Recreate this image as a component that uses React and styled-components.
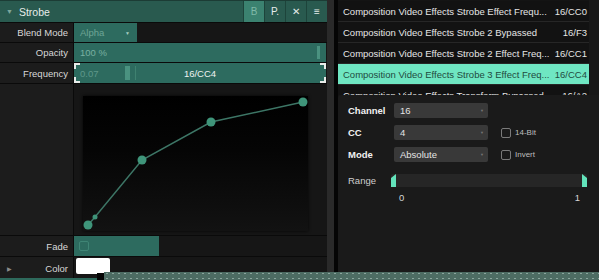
import styled, { createGlobalStyle } from 'styled-components'

const GlobalStyle = createGlobalStyle`
  html, body {
    margin: 0;
    padding: 0;
    background: #111;
    overflow: hidden;
  }
  body {
    font-family: 'Liberation Sans', Arial, sans-serif;
    font-size: 9.5px;
  }
`

const mappings = [
  { name: 'Composition Video Effects Strobe Effect Frequ...', id: '16/CC0' },
  { name: 'Composition Video Effects Strobe 2 Bypassed', id: '16/F3' },
  { name: 'Composition Video Effects Strobe 2 Effect Freq...', id: '16/CC1' },
  { name: 'Composition Video Effects Strobe 3 Effect Freq...', id: '16/CC4', active: true },
  { name: 'Composition Video Effects Transform Bypassed', id: '16/A2' },
]

const curve = [
  [5, 129, 4.5],
  [12, 121, 2.5],
  [59, 64, 4.5],
  [128, 26, 4.5],
  [220, 6, 4.5],
]

const App = () => {
  return (
    <Page>
      <GlobalStyle />
      <Inspector>
        <Header>
          <Caret>▼</Caret>
          <Title>Strobe</Title>
          <Buttons>
            <HeadButton $active>B</HeadButton>
            <HeadButton>P.</HeadButton>
            <HeadButton>✕</HeadButton>
            <HeadButton>≡</HeadButton>
          </Buttons>
        </Header>

        <Row $h={20}>
          <Label>Blend Mode</Label>
          <Cell>
            <Dropdown>
              Alpha
              <DropArrow>▼</DropArrow>
            </Dropdown>
          </Cell>
        </Row>

        <Row $h={20}>
          <Label>Opacity</Label>
          <Cell>
            <Bar>
              <BarValue>100 %</BarValue>
              <Handle style={{ left: 243 }} />
            </Bar>
          </Cell>
        </Row>

        <Row $h={21}>
          <Label>Frequency</Label>
          <Cell>
            <Bar>
              <BarValue $dim>0.07</BarValue>
              <Handle style={{ left: 51, width: 5 }} />
              <Tick style={{ left: 61 }} />
              <BarCenter>16/CC4</BarCenter>
              <Corner $v="top" $h="left" />
              <Corner $v="bottom" $h="left" />
              <Corner $v="top" $h="right" />
              <Corner $v="bottom" $h="right" />
            </Bar>
          </Cell>
        </Row>

        <Row $h={152}>
          <Label />
          <CurveCell>
            <CurveBox>
              <svg width="225" height="135" viewBox="0 0 225 135">
                <polyline
                  points={curve.map(([x, y]) => `${x},${y}`).join(' ')}
                  fill="none"
                  stroke="#3d7666"
                  strokeWidth="1.5"
                />
                {curve.map(([x, y, r], i) => (
                  <circle key={i} cx={x} cy={y} r={r} fill="#3f957a" />
                ))}
              </svg>
            </CurveBox>
          </CurveCell>
        </Row>

        <Row $h={21}>
          <Label>Fade</Label>
          <Cell>
            <FadeBar>
              <Check $teal />
            </FadeBar>
          </Cell>
        </Row>

        <Row $h={24}>
          <Label>
            <Expand>▶</Expand>
            Color
          </Label>
          <Cell $top>
            <Swatch />
          </Cell>
        </Row>
      </Inspector>

      <Gutter />

      <Side>
        <ListArea>
          <List>
            {mappings.map((m) => (
              <ListRow key={m.id} $active={m.active}>
                <span>{m.name}</span>
                <span>{m.id}</span>
              </ListRow>
            ))}
          </List>
          <ScrollTrack />
        </ListArea>

        <MappingPanel>
          <FormRow>
            <FormLabel>Channel</FormLabel>
            <Select>
              16<SelArrow>▼</SelArrow>
            </Select>
          </FormRow>
          <FormRow>
            <FormLabel>CC</FormLabel>
            <Select>
              4<SelArrow>▼</SelArrow>
            </Select>
            <Option>
              <Check />
              14-Bit
            </Option>
          </FormRow>
          <FormRow>
            <FormLabel>Mode</FormLabel>
            <Select>
              Absolute<SelArrow>▼</SelArrow>
            </Select>
            <Option>
              <Check />
              Invert
            </Option>
          </FormRow>
          <RangeRow>
            <RangeLabel>Range</RangeLabel>
            <Track>
              <Grip $side="left" />
              <Grip $side="right" />
            </Track>
          </RangeRow>
          <RangeScale>
            <span>0</span>
            <span>1</span>
          </RangeScale>
        </MappingPanel>
      </Side>

      <Dock>
        <DockStub />
        <DockNotch />
        <DockBar />
      </Dock>
    </Page>
  )
}

export default App

const Page = styled.div`
  position: relative;
  width: 599px;
  height: 280px;
  display: flex;
  overflow: hidden;
  background: #161616;
  color: #d6d6d6;
`
const Inspector = styled.div`
  width: 327px;
  display: flex;
  flex-direction: column;
  background: #151515;
`
const Header = styled.div`
  height: 21px;
  border-top: 1px solid #1c3c35;
  display: flex;
  align-items: center;
  background: #295a4f;
`
const Caret = styled.span`
  font-size: 7px;
  color: #7ea79b;
  margin-left: 6px;
`
const Title = styled.span`
  font-size: 10.5px;
  color: #e8ecea;
  margin-left: 6px;
`
const Buttons = styled.div`
  margin-left: auto;
  display: flex;
  height: 100%;
`
const HeadButton = styled.div`
  width: 20px;
  height: 100%;
  display: flex;
  align-items: center;
  justify-content: center;
  border-left: 1px solid #1d443b;
  background: ${(p) => (p.$active ? '#3b8270' : '#295a4f')};
  color: ${(p) => (p.$active ? '#7fb9a8' : '#e6ecea')};
  font-size: 10px;
`
const Row = styled.div`
  height: ${(p) => p.$h}px;
  display: flex;
  border-top: 1px solid #0a0a0a;
  box-sizing: border-box;
`
const Label = styled.div`
  position: relative;
  width: 68px;
  padding-right: 5px;
  display: flex;
  align-items: center;
  justify-content: flex-end;
  background: #1c1c1c;
  color: #d8d8d8;
  white-space: nowrap;
  border-right: 1px solid #0a0a0a;
`
const Expand = styled.span`
  position: absolute;
  left: 7px;
  font-size: 6px;
  color: #8a8a8a;
`
const Cell = styled.div`
  flex: 1;
  display: flex;
  align-items: ${(p) => (p.$top ? 'flex-start' : 'stretch')};
  padding-right: 1px;
  background: #161616;
`
const Dropdown = styled.div`
  width: 57px;
  padding-left: 6px;
  display: flex;
  align-items: center;
  background: #2d6b5f;
  color: #6ea596;
  position: relative;
`
const DropArrow = styled.span`
  position: absolute;
  right: 7px;
  font-size: 5px;
  color: #a6cbc0;
`
const Bar = styled.div`
  position: relative;
  flex: 1;
  display: flex;
  align-items: center;
  background: #2d6b5f;
`
const BarValue = styled.span`
  margin-left: 6px;
  color: ${(p) => (p.$dim ? '#5f988a' : '#79b0a1')};
`
const BarCenter = styled.span`
  position: absolute;
  left: 0;
  right: 0;
  text-align: center;
  color: #eef3f1;
`
const Handle = styled.div`
  position: absolute;
  top: 3px;
  bottom: 3px;
  width: 3px;
  background: #4a9280;
`
const Tick = styled.div`
  position: absolute;
  top: 3px;
  bottom: 3px;
  width: 1px;
  background: #3f8170;
`
const Corner = styled.div`
  position: absolute;
  width: 4px;
  height: 4px;
  ${(p) => p.$v}: 0;
  ${(p) => p.$h}: 0;
  border-${(p) => p.$v}: 2px solid #e9ecea;
  border-${(p) => p.$h}: 2px solid #e9ecea;
`
const CurveCell = styled.div`
  flex: 1;
  padding: 12px 18px 3px 9px;
  background: #161616;
`
const CurveBox = styled.div`
  width: 225px;
  height: 135px;
  background: linear-gradient(#000 0%, #050505 40%, #121212 100%);
  box-shadow: 0 0 3px #050505;
`
const FadeBar = styled.div`
  box-sizing: border-box;
  width: 85px;
  display: flex;
  align-items: center;
  padding-left: 5px;
  background: #2d6b5f;
`
const Check = styled.div`
  width: 8px;
  height: 8px;
  border: 1px solid ${(p) => (p.$teal ? '#3f8575' : '#7a7a7a')};
  border-radius: 2px;
  margin-right: 4px;
  flex-shrink: 0;
`
const Swatch = styled.div`
  width: 34px;
  height: 16px;
  margin: 1px 0 0 2px;
  background: #fff;
  border-radius: 2px;
`
const Gutter = styled.div`
  width: 7px;
  background: #2a2a2a;
  border-right: 4px solid #050505;
`
const Side = styled.div`
  flex: 1;
  display: flex;
  flex-direction: column;
  background: #141414;
`
const ListArea = styled.div`
  height: 95px;
  display: flex;
  overflow: hidden;
`
const List = styled.div`
  width: 251px;
  padding-top: 1px;
`
const ListRow = styled.div`
  height: 20px;
  display: flex;
  align-items: center;
  justify-content: space-between;
  padding: 0 2px 0 5px;
  border-bottom: 1px solid #262626;
  background: ${(p) => (p.$active ? '#6fe6c2' : '#121212')};
  color: ${(p) => (p.$active ? '#1f4a3e' : '#e6e6e6')};
  white-space: nowrap;
`
const ScrollTrack = styled.div`
  flex: 1;
  background: #181818;
`
const MappingPanel = styled.div`
  flex: 1;
  background: #1a1a1a;
  border-top-left-radius: 3px;
  padding: 8px 0 0 10px;
  display: flex;
  flex-direction: column;
`
const FormRow = styled.div`
  height: 15px;
  margin-bottom: 7px;
  display: flex;
  align-items: center;
`
const FormLabel = styled.div`
  width: 46px;
  font-weight: bold;
  color: #f2f2f2;
`
const Select = styled.div`
  position: relative;
  width: 88px;
  height: 15px;
  padding-left: 6px;
  display: flex;
  align-items: center;
  background: #393939;
  border-radius: 2px;
  color: #e4e4e4;
`
const SelArrow = styled.span`
  position: absolute;
  right: 4px;
  font-size: 4px;
  color: #777;
`
const Option = styled.div`
  margin-left: 13px;
  display: flex;
  align-items: center;
  font-size: 8px;
  color: #bdbdbd;
`
const RangeRow = styled.div`
  margin-top: 5px;
  height: 13px;
  display: flex;
  align-items: center;
`
const RangeLabel = styled.div`
  width: 43px;
  color: #cfcfcf;
`
const Track = styled.div`
  position: relative;
  width: 196px;
  height: 13px;
  background: #262626;
  border-radius: 2px;
`
const Grip = styled.div`
  position: absolute;
  top: 0;
  ${(p) => p.$side}: 0;
  width: 5px;
  height: 13px;
  background: #63e3bb;
  clip-path: ${(p) =>
    p.$side === 'left'
      ? 'polygon(0 4px, 100% 0, 100% 100%, 0 100%)'
      : 'polygon(0 0, 100% 4px, 100% 100%, 0 100%)'};
`
const RangeScale = styled.div`
  width: 181px;
  margin: 5px 0 0 51px;
  display: flex;
  justify-content: space-between;
  color: #d6d6d6;
`
const Dock = styled.div`
  position: absolute;
  left: 0;
  right: 0;
  top: 272px;
  height: 8px;
  display: flex;
`
const DockStub = styled.div`
  width: 97px;
  margin-top: 6px;
  background: #2e6a5c;
`
const DockNotch = styled.div`
  width: 7px;
  margin-top: 1px;
  background: #050505;
`
const DockBar = styled.div`
  flex: 1;
  background-color: #4d6c63;
  background-image: radial-gradient(circle, #8aa59d 0.7px, transparent 1.1px);
  background-size: 6px 5px;
  background-position: 0 -1px;
`
